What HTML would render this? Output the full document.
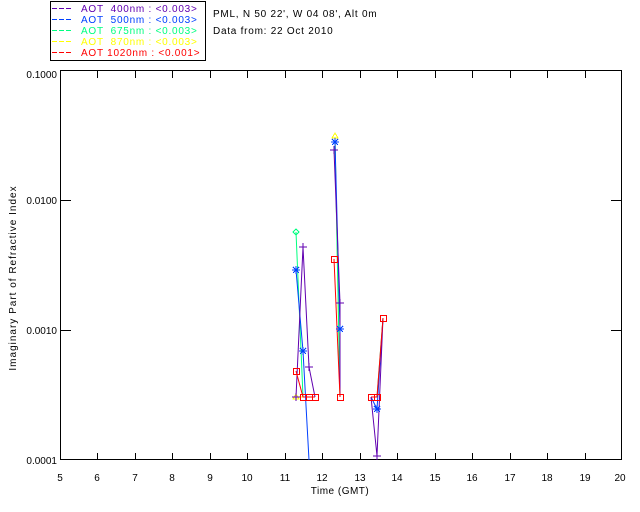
<!DOCTYPE html>
<html><head><style>
html,body{margin:0;padding:0;background:#fff;}
body{width:640px;height:512px;overflow:hidden;}
svg{display:block;}
text{font-family:"Liberation Sans",sans-serif;font-size:10px;}
</style></head><body>
<svg width="640" height="512" viewBox="0 0 640 512" xmlns="http://www.w3.org/2000/svg" shape-rendering="crispEdges">
<rect width="640" height="512" fill="#fff"/>
<!-- legend -->
<rect x="50.5" y="1.5" width="155" height="59" fill="none" stroke="#000"/>
<g stroke-dasharray="5,2" stroke-width="1">
<line x1="52" y1="8.5" x2="73" y2="8.5" stroke="#6000b0"/>
<line x1="52" y1="19.5" x2="73" y2="19.5" stroke="#0040ff"/>
<line x1="52" y1="30.5" x2="73" y2="30.5" stroke="#00ff80"/>
<line x1="52" y1="41.5" x2="73" y2="41.5" stroke="#ffff00"/>
<line x1="52" y1="52.5" x2="73" y2="52.5" stroke="#ff0000"/>
</g>
<g letter-spacing="0.75">
<text x="81" y="12" fill="#6000b0" xml:space="preserve">AOT  400nm : &lt;0.003&gt;</text>
<text x="81" y="23" fill="#0040ff" xml:space="preserve">AOT  500nm : &lt;0.003&gt;</text>
<text x="81" y="34" fill="#00ff80" xml:space="preserve">AOT  675nm : &lt;0.003&gt;</text>
<text x="81" y="45" fill="#ffff00" xml:space="preserve">AOT  870nm : &lt;0.003&gt;</text>
<text x="81" y="56" fill="#ff0000" xml:space="preserve">AOT 1020nm : &lt;0.001&gt;</text>
<text x="213" y="17" fill="#000">PML, N 50 22', W 04 08', Alt 0m</text>
<text x="213" y="34" fill="#000">Data from: 22 Oct 2010</text>
</g>
<!-- axes -->
<rect x="60.5" y="70.5" width="561" height="389" fill="none" stroke="#000"/>
<g stroke="#000">
<path d="M97.5 460V453M135.5 460V453M172.5 460V453M210.5 460V453M247.5 460V453M285.5 460V453M322.5 460V453M360.5 460V453M397.5 460V453M435.5 460V453M472.5 460V453M510.5 460V453M547.5 460V453M585.5 460V453"/>
<path d="M97.5 70V78M135.5 70V78M172.5 70V78M210.5 70V78M247.5 70V78M285.5 70V78M322.5 70V78M360.5 70V78M397.5 70V78M435.5 70V78M472.5 70V78M510.5 70V78M547.5 70V78M585.5 70V78"/>
<path d="M60 200.5H71M60 330.5H71M622 200.5H611M622 330.5H611"/>
</g>
<g fill="#000" text-anchor="middle">
<text x="60" y="481">5</text><text x="97" y="481">6</text><text x="135" y="481">7</text><text x="172" y="481">8</text><text x="210" y="481">9</text><text x="247" y="481">10</text><text x="285" y="481">11</text><text x="322" y="481">12</text><text x="360" y="481">13</text><text x="397" y="481">14</text><text x="435" y="481">15</text><text x="472" y="481">16</text><text x="510" y="481">17</text><text x="547" y="481">18</text><text x="585" y="481">19</text><text x="620" y="481">20</text>
<text x="340" y="494" letter-spacing="0.5">Time (GMT)</text>
</g>
<g fill="#000" text-anchor="end">
<text x="57" y="78">0.1000</text><text x="57" y="204">0.0100</text><text x="57" y="334">0.0010</text><text x="57" y="464">0.0001</text>
</g>
<text x="0" y="0" fill="#000" text-anchor="middle" letter-spacing="1" transform="translate(16,278) rotate(-90)">Imaginary Part of Refractive Index</text>
<!-- data -->
<g fill="none" stroke-width="1" shape-rendering="auto">
<polyline stroke="#ffff00" points="296,397 303,397 309,397 315,397"/>
<polyline stroke="#ffff00" points="335,137 340,397"/>
<polyline stroke="#00ff80" points="296,232 303,397 309,397 315,397"/>
<polyline stroke="#00ff80" points="335,140 340,397"/>
<polyline stroke="#00ff80" points="371,397 377,397 383,318"/>
<polyline stroke="#0040ff" points="296,270 303,351 309,460"/>
<polyline stroke="#0040ff" points="335,142 340,329 340,397"/>
<polyline stroke="#0040ff" points="371,397 377,409 383,318"/>
<polyline stroke="#6000b0" points="296,397 303,247 309,367 315,397"/>
<polyline stroke="#6000b0" points="334,150 340,303 340,397"/>
<polyline stroke="#6000b0" points="371,397 377,456 383,318"/>
<polyline stroke="#ff0000" points="296,371 303,397 315,397"/>
<polyline stroke="#ff0000" points="334,259 340,397"/>
<polyline stroke="#ff0000" points="371,397 377,397 383,318"/>
</g>
<!-- markers -->
<g fill="none" stroke-width="1">
<path stroke="#00ff80" d="M296 229l3 3-3 3-3-3z"/>
<path stroke="#ffff00" d="M335 133l3 5h-6z M296 394l3 5h-6z"/>
<path stroke="#0040ff" d="M292 270h8M296 266v8M293 267l6 6M299 267l-6 6 M299 351h8M303 347v8M300 348l6 6M306 348l-6 6 M331 142h8M335 138v8M332 139l6 6M338 139l-6 6 M336 329h8M340 325v8M337 326l6 6M343 326l-6 6 M373 409h8M377 405v8M374 406l6 6M380 406l-6 6"/>
<path stroke="#6000b0" d="M299 247h8M303 243v8 M305 367h8M309 363v8 M330 150h8M334 146v8 M336 303h8M340 299v8 M373 456h8M377 452v8 M292 397h8M296 393v8"/>
<path stroke="#ff0000" d="M293.5 368.5h6v6h-6z M300.5 394.5h6v6h-6z M306.5 394.5h6v6h-6z M312.5 394.5h6v6h-6z M331.5 256.5h6v6h-6z M337.5 394.5h6v6h-6z M368.5 394.5h6v6h-6z M374.5 394.5h6v6h-6z M380.5 315.5h6v6h-6z"/>
</g>
</svg>
</body></html>
